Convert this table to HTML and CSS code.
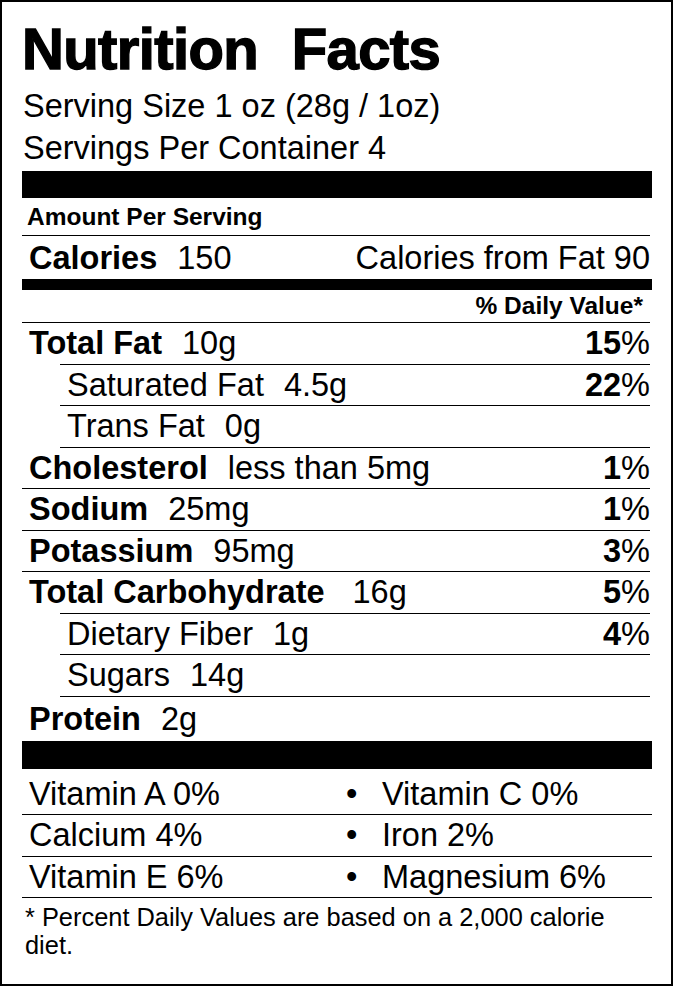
FILE: index.html
```html
<!DOCTYPE html>
<html lang="en">
<head>
<meta charset="utf-8">
<title>Nutrition Facts</title>
<link rel="stylesheet" href="styles.css">
</head>
<body>
<section class="label">
  <h1 class="title">Nutrition Facts</h1>
  <p class="serving">Serving Size 1 oz (28g / 1oz)</p>
  <p class="serving">Servings Per Container 4</p>
  <div class="bar bar-top"></div>
  <div class="amount">Amount Per Serving</div>
  <div class="calories">
    <span><b>Calories</b><span class="qty">150</span></span>
    <span>Calories from Fat 90</span>
  </div>
  <div class="bar bar-mid"></div>
  <div class="dv">% Daily Value*</div>

  <div class="row under-indent"><span><b>Total Fat</b><span class="qty">10g</span></span><span><b>15</b>%</span></div>
  <div class="row sub under-indent"><span>Saturated Fat<span class="qty">4.5g</span></span><span><b>22</b>%</span></div>
  <div class="row sub"><span>Trans Fat<span class="qty">0g</span></span><span></span></div>
  <div class="row"><span><b>Cholesterol</b><span class="qty">less than 5mg</span></span><span><b>1</b>%</span></div>
  <div class="row"><span><b>Sodium</b><span class="qty">25mg</span></span><span><b>1</b>%</span></div>
  <div class="row"><span><b>Potassium</b><span class="qty">95mg</span></span><span><b>3</b>%</span></div>
  <div class="row under-indent"><span><b>Total Carbohydrate</b><span class="qty wide">16g</span></span><span><b>5</b>%</span></div>
  <div class="row sub under-indent"><span>Dietary Fiber<span class="qty">1g</span></span><span><b>4</b>%</span></div>
  <div class="row sub"><span>Sugars<span class="qty">14g</span></span><span></span></div>
  <div class="row last"><span><b>Protein</b><span class="qty">2g</span></span><span></span></div>

  <div class="bar bar-bottom"></div>

  <div class="vit first"><span>Vitamin A 0%</span><span class="dot">•</span><span>Vitamin C 0%</span></div>
  <div class="vit"><span>Calcium 4%</span><span class="dot">•</span><span>Iron 2%</span></div>
  <div class="vit"><span>Vitamin E 6%</span><span class="dot">•</span><span>Magnesium 6%</span></div>

  <p class="foot">* Percent Daily Values are based on a 2,000 calorie diet.</p>
</section>
</body>
</html>
```

FILE: styles.css
```css
html, body {
  margin: 0;
  padding: 0;
  background: #fff;
}

.label {
  box-sizing: border-box;
  width: 673px;
  height: 986px;
  border: 2px solid #000;
  padding: 18px 19px 0 20px;
  font-family: "Liberation Sans", Arial, sans-serif;
  color: #000;
}

.title {
  margin: 0;
  font-size: 58px;
  line-height: 58px;
  font-weight: 700;
  letter-spacing: -0.6px;
  word-spacing: 18px;
  -webkit-text-stroke: 1.4px #000;
  padding-left: 0;
}

.serving {
  margin: 0;
  font-size: 32.5px;
  line-height: 41.5px;
  padding-left: 1px;
}

.serving:first-of-type {
  margin-top: 8px;
}

.bar {
  background: #000;
}

.bar-top {
  height: 27px;
  margin-top: 2px;
}

.bar-mid {
  height: 11px;
}

.bar-bottom {
  height: 28px;
}

.amount {
  font-size: 24.5px;
  font-weight: 700;
  line-height: 37px;
  padding-left: 5px;
  border-bottom: 1px solid #000;
  margin-right: 2px;
}

.calories {
  display: flex;
  justify-content: space-between;
  font-size: 32.5px;
  line-height: 41px;
  padding: 2px 2px 0 7px;
}

.qty {
  margin-left: 20px;
}

.qty.wide {
  margin-left: 28px;
}

.dv {
  text-align: right;
  font-size: 24.5px;
  font-weight: 700;
  line-height: 32px;
  padding-right: 7px;
  border-bottom: 1px solid #000;
  margin-right: 2px;
}

.row {
  display: flex;
  justify-content: space-between;
  font-size: 32.5px;
  line-height: 40.5px;
  padding-left: 7px;
  margin-right: 2px;
  border-bottom: 1px solid #000;
  position: relative;
}

.row.sub {
  margin-left: 38px;
}

.row.under-indent {
  border-bottom: none;
  padding-bottom: 1px;
  background: linear-gradient(#000, #000) no-repeat right bottom / calc(100% - 38px) 1px;
}

.row.sub.under-indent {
  background-size: 100% 1px;
}

.row.last {
  border-bottom: none;
  line-height: 44px;
}

.vit {
  display: grid;
  grid-template-columns: 316px 37px 1fr;
  font-size: 32.5px;
  line-height: 40.5px;
  padding-left: 7px;
  border-bottom: 1px solid #000;
}

.vit.first {
  padding-top: 5px;
}

.dot {
  padding-left: 1px;
}

.foot {
  margin: 0;
  padding: 5px 0 0 3px;
  max-width: 600px;
  font-size: 25.4px;
  line-height: 28px;
}
```
